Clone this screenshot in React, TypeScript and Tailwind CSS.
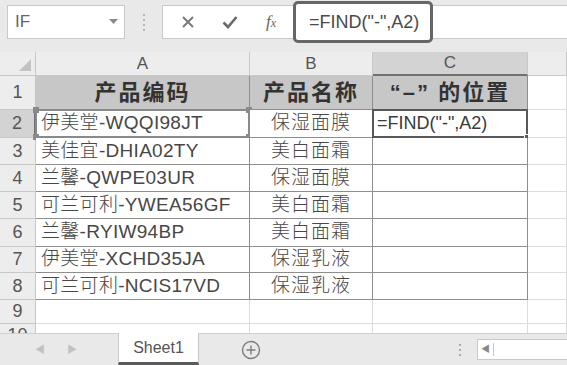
const font = "font-['Liberation_Sans','Noto_Sans_CJK_SC',sans-serif]";

const cols = [
  { key: "A", w: "w-[214px]" },
  { key: "B", w: "w-[123px]" },
  { key: "C", w: "w-[155px]" },
  { key: "", w: "flex-1" },
];

const data = [
  ["伊美堂-WQQI98JT", "保湿面膜"],
  ["美佳宜-DHIA02TY", "美白面霜"],
  ["兰馨-QWPE03UR", "保湿面膜"],
  ["可兰可利-YWEA56GF", "美白面霜"],
  ["兰馨-RYIW94BP", "美白面霜"],
  ["伊美堂-XCHD35JA", "保湿乳液"],
  ["可兰可利-NCIS17VD", "保湿乳液"],
];

const rowHeights = ["h-[34px]", "h-[28px]", "h-[27px]", "h-[27px]", "h-[27px]", "h-[28px]", "h-[26px]", "h-[27px]", "h-[24px]", "h-[24px]"];

function Cell({ row, col }: { row: number; col: number }) {
  const inTable = row >= 1 && row <= 8 && col <= 2;
  const border = inTable
    ? "border-r border-b border-[#8e8e8e]"
    : "border-r border-b border-[#dcdcdc]";
  const w = cols[col].w;
  let content: React.ReactNode = null;
  let extra = "bg-white";

  if (row === 1 && col <= 2) {
    extra = "bg-[#c7c7c7] justify-center font-bold text-[22px] tracking-[2px] text-[#333]";
    content = ["产品编码", "产品名称", "“–” 的位置"][col];
  } else if (row >= 2 && row <= 8 && col === 0) {
    extra = "bg-white pl-[5px] text-[19px] font-light tracking-[0.3px] text-[#474747]";
    content = data[row - 2][0];
  } else if (row >= 2 && row <= 8 && col === 1) {
    extra = "bg-white justify-center text-[19px] font-light tracking-[1px] text-[#474747]";
    content = data[row - 2][1];
  } else if (row === 2 && col === 2) {
    extra = "bg-white pl-[4px] text-[18px] text-[#3a3a3a]";
    content = '=FIND("-",A2)';
  }

  return (
    <div className={`relative flex h-full shrink-0 items-center whitespace-nowrap ${w} ${border} ${extra}`}>
      {content}
      {row === 2 && col === 0 && (
        <div className="pointer-events-none absolute -left-[1px] -top-[1px] -bottom-[1px] -right-[1px] border-2 border-[#8a8a8a]">
          <span className="absolute -left-[4px] -top-[4px] h-[6px] w-[6px] bg-[#8a8a8a]" />
          <span className="absolute -right-[4px] -top-[4px] h-[6px] w-[6px] bg-[#8a8a8a]" />
          <span className="absolute -left-[4px] -bottom-[4px] h-[6px] w-[6px] bg-[#8a8a8a]" />
          <span className="absolute -right-[4px] -bottom-[4px] h-[6px] w-[6px] bg-[#8a8a8a]" />
        </div>
      )}
      {row === 2 && col === 2 && (
        <div className="pointer-events-none absolute -left-[1px] -top-[1px] -bottom-[1px] -right-[1px] border-2 border-[#585858]">
          <span className="absolute -right-[4px] -bottom-[4px] h-[6px] w-[6px] border border-white bg-[#585858]" />
        </div>
      )}
    </div>
  );
}

function FormulaBar() {
  return (
    <div className="flex h-[52px] shrink-0 items-start pt-[5px]">
      <div className="ml-[7px] flex h-[34px] w-[118px] items-center justify-between border border-[#c9c9c9] bg-white pl-[7px] pr-[6px] text-[17px] text-[#666]">
        <span>IF</span>
        <svg width="9" height="6" viewBox="0 0 9 6">
          <path d="M0 0 L9 0 L4.5 5 Z" fill="#8a8a8a" />
        </svg>
      </div>
      <div className="flex h-[34px] w-[37px] flex-col items-center justify-center gap-[3px]">
        <span className="h-[2px] w-[2px] bg-[#b5b5b5]" />
        <span className="h-[2px] w-[2px] bg-[#b5b5b5]" />
        <span className="h-[2px] w-[2px] bg-[#b5b5b5]" />
        <span className="h-[2px] w-[2px] bg-[#b5b5b5]" />
      </div>
      <div className="flex h-[34px] flex-1 items-center border border-r-0 border-[#c9c9c9] bg-white">
        <div className="flex w-[45px] justify-center pl-[4px]">
          <svg width="14" height="14" viewBox="0 0 14 14">
            <path d="M2 2 L12 12 M12 2 L2 12" stroke="#7a7a7a" strokeWidth="2" />
          </svg>
        </div>
        <div className="flex w-[43px] justify-center">
          <svg width="16" height="14" viewBox="0 0 16 14">
            <path d="M1.5 7.5 L6 12 L14.5 2" stroke="#6a6a6a" strokeWidth="2.6" fill="none" />
          </svg>
        </div>
        <div className="flex w-[40px] items-baseline justify-center font-['Liberation_Serif',serif] italic text-[#666]">
          <span className="text-[17px]">f</span>
          <span className="text-[12px]">x</span>
        </div>
        <div className="-my-[4px] ml-[2px] flex h-[42px] w-[140px] items-center rounded-[5px] border-[3px] border-[#666] bg-white pl-[13px] text-[18px] text-[#4a4a4a]">
          =FIND("-",A2)
        </div>
      </div>
    </div>
  );
}

function Grid() {
  return (
    <div className="flex min-h-0 flex-1 flex-col overflow-hidden bg-white">
      <div className="flex h-[24px] shrink-0">
        <div className="flex w-[36px] shrink-0 items-end justify-end border-r border-b border-[#c8c8c8] bg-[#ededed] pb-[4px] pr-[4px]">
          <svg width="12" height="12" viewBox="0 0 12 12">
            <path d="M12 0 L12 12 L0 12 Z" fill="#c3c3c3" />
          </svg>
        </div>
        {cols.map((c, i) => (
          <div
            key={i}
            className={`flex shrink-0 items-center justify-center text-[17px] text-[#555] ${c.w} ${
              i === 2
                ? "border-b-2 border-r border-b-[#707070] border-r-[#c8c8c8] bg-[#d3d3d3]"
                : "border-r border-b border-[#c8c8c8] bg-[#ededed]"
            }`}
          >
            {c.key}
          </div>
        ))}
      </div>
      {rowHeights.map((h, r) => {
        const row = r + 1;
        return (
          <div key={row} className={`flex shrink-0 ${h}`}>
            <div
              className={`flex w-[36px] shrink-0 items-center justify-center border-b text-[18px] text-[#555] ${
                row === 2
                  ? "border-r-2 border-r-[#707070] border-b-[#c8c8c8] bg-[#d3d3d3]"
                  : "border-r border-[#c8c8c8] bg-[#ededed]"
              }`}
            >
              {row}
            </div>
            {cols.map((c, col) => (
              <Cell key={col} row={row} col={col} />
            ))}
          </div>
        );
      })}
    </div>
  );
}

function SheetTabs() {
  return (
    <div className="flex h-[32px] shrink-0 items-stretch border-t border-[#cfcfcf] bg-[#e9e9e9]">
      <div className="flex w-[118px] items-center">
        <span className="ml-[35px] text-[10px] text-[#c2c2c2]">◀</span>
        <span className="ml-[22px] text-[10px] text-[#c2c2c2]">▶</span>
      </div>
      <div className="-mt-[1px] flex w-[81px] items-center justify-center border-x border-b-[3px] border-x-[#c8c8c8] border-b-[#5a5a5a] bg-white text-[16px] text-[#555]">
        Sheet1
      </div>
      <div className="ml-[42px] flex items-center">
        <svg width="20" height="20" viewBox="0 0 20 20">
          <circle cx="10" cy="10" r="8.5" stroke="#7d7d7d" strokeWidth="1.4" fill="none" />
          <path d="M10 5.5 V14.5 M5.5 10 H14.5" stroke="#7d7d7d" strokeWidth="1.4" />
        </svg>
      </div>
      <div className="ml-auto flex items-center">
        <div className="flex flex-col gap-[3px]">
          <span className="h-[2px] w-[2px] bg-[#aaa]" />
          <span className="h-[2px] w-[2px] bg-[#aaa]" />
          <span className="h-[2px] w-[2px] bg-[#aaa]" />
        </div>
        <div className="ml-[16px] flex h-[21px] w-[90px] items-center border border-r-0 border-[#c8c8c8] bg-white">
          <span className="flex w-[16px] items-center justify-center border-r border-[#c8c8c8] text-[9px] text-[#888]">◀</span>
        </div>
      </div>
    </div>
  );
}

export default function App() {
  return (
    <div className={`flex h-[365px] w-[567px] flex-col overflow-hidden bg-[#e9e9e9] ${font}`}>
      <FormulaBar />
      <Grid />
      <SheetTabs />
    </div>
  );
}
